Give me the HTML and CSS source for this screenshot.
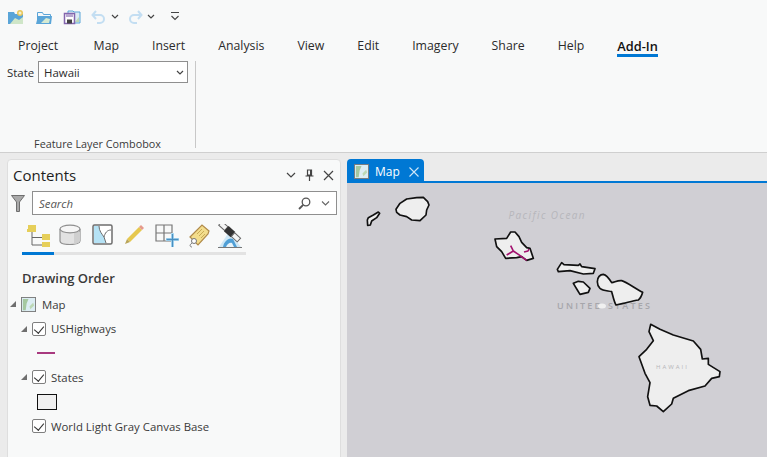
FILE: index.html
```html
<!DOCTYPE html>
<html lang="en">
<head>
<meta charset="utf-8">
<title>Map</title>
<link rel="stylesheet" href="styles.css">
</head>
<body>
<header class="ribbon">
  <div class="qat">
    <svg class="qi" width="18" height="16" viewBox="0 0 18 16"><path d="M1 3h6l1 2h8v10H1z" fill="#5aa5d8"/><path d="M3 15l5-6 4 2 4-3v7z" fill="#cfe6c8"/><circle cx="13" cy="4" r="3" fill="#e8c75a"/><circle cx="13" cy="4" r="1.500" fill="#f6f0c8"/></svg>
    <svg class="qi" width="18" height="16" viewBox="0 0 18 16"><path d="M2.500 3.500h5l1 2h7v9h-13z" fill="#f4f8fa" stroke="#5aa5d8"/><path d="M1 15l2-8h14l-1 8z" fill="#5aa5d8"/><path d="M6 14l5-5 4 1-1 4z" fill="#d6ead2"/></svg>
    <svg class="qi" width="18" height="16" viewBox="0 0 18 16"><path d="M5 2h5l1 1h6v11H5z" fill="#dcebf4" stroke="#5aa5d8"/><path d="M12 13l4-5v5z" fill="#bcd9b4"/><rect x="1.500" y="4.500" width="10" height="10" fill="#fff" stroke="#8265ad" stroke-width="1.500"/><rect x="3" y="5" width="7" height="3" fill="#b6a6cf"/><rect x="4" y="10.500" width="5" height="4" fill="#444"/></svg>
    <svg class="qi undo" width="16" height="14" viewBox="0 0 16 14"><path d="M5 1L1.500 5 5 9M2 5h7a4 4 0 0 1 0 8H6" fill="none" stroke="#c3def2" stroke-width="2"/></svg>
    <svg class="qc" width="8" height="5" viewBox="0 0 8 5"><path d="M1 1l3 3 3-3" fill="none" stroke="#444" stroke-width="1.200"/></svg>
    <svg class="qi redo" width="16" height="14" viewBox="0 0 16 14"><path d="M11 1l3.500 4L11 9M14 5H7a4 4 0 0 0 0 8h3" fill="none" stroke="#c3def2" stroke-width="2"/></svg>
    <svg class="qc" width="8" height="5" viewBox="0 0 8 5"><path d="M1 1l3 3 3-3" fill="none" stroke="#444" stroke-width="1.200"/></svg>
    <svg class="qc more" width="10" height="9" viewBox="0 0 10 9"><path d="M1 .5h8M1.500 4l3.500 3.500L8.500 4" fill="none" stroke="#444" stroke-width="1.100"/></svg>
  </div>
  <nav class="tabs">
    <span class="tab first">Project</span>
    <span class="tab">Map</span>
    <span class="tab">Insert</span>
    <span class="tab">Analysis</span>
    <span class="tab">View</span>
    <span class="tab">Edit</span>
    <span class="tab">Imagery</span>
    <span class="tab">Share</span>
    <span class="tab">Help</span>
    <span class="tab active">Add-In</span>
  </nav>
  <section class="group">
    <div class="combo-row">
      <span class="combo-label">State</span>
      <div class="combo"><span>Hawaii</span>
        <svg width="8" height="5" viewBox="0 0 8 5"><path d="M1 1l3 3 3-3" fill="none" stroke="#444" stroke-width="1.200"/></svg>
      </div>
    </div>
    <div class="group-name">Feature Layer Combobox</div>
  </section>
</header>
<main class="workspace">
  <aside class="pane">
    <div class="pane-head">
      <h1>Contents</h1>
      <div class="pane-tools">
        <svg width="10" height="6" viewBox="0 0 10 6"><path d="M1 1l4 4 4-4" fill="none" stroke="#444" stroke-width="1.200"/></svg>
        <svg width="9" height="12" viewBox="0 0 9 12"><path d="M2.500 1h4v5h-4zM.5 7h8M4.500 7v5" fill="none" stroke="#444" stroke-width="1.200"/><rect x="5" y="1" width="2" height="5" fill="#444"/></svg>
        <svg width="11" height="11" viewBox="0 0 11 11"><path d="M1 1l9 9M10 1l-9 9" fill="none" stroke="#444" stroke-width="1.200"/></svg>
      </div>
    </div>
    <div class="search-row">
      <svg width="14" height="17" viewBox="0 0 14 17"><path d="M.5.500h13L8.500 7v9.500h-3V7z" fill="#a9a9a9" stroke="#6e6e6e"/></svg>
      <div class="search">
        <span class="search-text">Search</span>
        <svg class="mag" width="13" height="13" viewBox="0 0 13 13"><circle cx="8" cy="5" r="3.800" fill="none" stroke="#555" stroke-width="1.300"/><path d="M5.200 7.800L1 12" stroke="#555" stroke-width="1.800"/></svg>
        <svg width="9" height="5" viewBox="0 0 9 5"><path d="M1 .5l3.500 3.500L8 .5" fill="none" stroke="#666" stroke-width="1.100"/></svg>
      </div>
    </div>
    <div class="view-icons">
      <svg width="24" height="24" viewBox="0 0 24 24"><rect x="1" y="1" width="8" height="4" fill="#e6cf5a"/><rect x="0" y="5" width="9" height="3" fill="#e6cf5a"/><path d="M5 8v13h10M5 13.500h10" fill="none" stroke="#666"/><rect x="15" y="10" width="8" height="6" fill="#e6cf5a"/><rect x="15" y="18" width="8" height="5" fill="#e6cf5a"/></svg>
      <svg width="22" height="21" viewBox="0 0 22 21"><path d="M1 5v12c0 2 4 3.500 10 3.500s10-1.500 10-3.500V5" fill="#e2e2e2" stroke="#8f8f8f" stroke-width="1.200"/><path d="M15 8h6v9c0 1-2 2.500-6 3z" fill="#cfcfcf"/><ellipse cx="11" cy="5" rx="10" ry="3.800" fill="#f6f6f6" stroke="#8f8f8f" stroke-width="1.200"/></svg>
      <svg width="21" height="21" viewBox="0 0 21 21"><rect x="1" y="1" width="19" height="19" rx="1.500" fill="#fff" stroke="#6d6d6d" stroke-width="1.500"/><path d="M2 2h5c0 5 3 8 5 11l2 6H2z" fill="#b5e2f5"/><path d="M7 2c0 5 3 8 5 11l2 6M19 6c-4 0-6 3-7 7" fill="none" stroke="#6d6d6d"/></svg>
      <svg width="21" height="21" viewBox="0 0 21 21"><path d="M3 15L15 3l3 3L6 18z" fill="#e6c84e"/><path d="M3 15l3 3-5 2z" fill="#b9a55a"/><path d="M15 3l2-2 3 3-2 2z" fill="#e59a8c"/></svg>
      <svg width="24" height="24" viewBox="0 0 24 24"><path d="M1 1h16v16H1zM9 1v16M1 9h16" fill="none" stroke="#777" stroke-width="1.200"/><rect x="11" y="14" width="13" height="3" fill="#aedcf5"/><rect x="16" y="9" width="3" height="14" fill="#aedcf5"/><path d="M11.500 15.500h12M17.500 10v13" stroke="#4a8fc0" stroke-width="1.300"/></svg>
      <svg width="22" height="24" viewBox="0 0 22 24"><path d="M2 13L14 1l7 6-1 3-10 11z" fill="#f3dd8c" stroke="#b08a4a" stroke-width="1.200"/><path d="M9 10l5-5M11 12l5-5M13 14l4-4" stroke="#c9ab55"/><circle cx="6" cy="17" r="2.500" fill="#fff" stroke="#777"/><path d="M4 19c-3 2-2 4 0 4" fill="none" stroke="#777"/></svg>
      <svg width="24" height="24" viewBox="0 0 24 24"><path d="M1 23L11 8l12 15z" fill="#cfe8f6"/><path d="M5 23c1-6 6-10 10-8l4 8z" fill="#4f9fd6"/><path d="M8 23c1-3 4-5 6-4l2 4z" fill="#e8f4fa"/><g transform="rotate(42 12 8)"><rect x="-1" y="5.500" width="8" height="5" fill="#f4f4f4" stroke="#666"/><rect x="7" y="4.500" width="9" height="7" fill="#333"/><rect x="16" y="5.500" width="8" height="5" fill="#f4f4f4" stroke="#666"/></g><path d="M0 23.500h24" stroke="#777"/></svg>
    </div>
    <div class="view-rule"><span></span></div>
    <h2>Drawing Order</h2>
    <ul class="tree">
      <li class="row lvl0">
        <i class="tri"></i>
        <svg width="16" height="16" viewBox="0 0 16 16"><rect x=".5" y=".5" width="15" height="15" fill="#dcedf3" stroke="#7a7a7a"/><path d="M2 2h6L6 7 5 14H2z" fill="#a5c8a0"/><path d="M13 6l1 3-4 4-1-3z" fill="#bcd8b4"/></svg>
        <span>Map</span>
      </li>
      <li class="row lvl1">
        <i class="tri"></i><i class="check"></i><span>USHighways</span>
      </li>
      <li class="row sym"><i class="line-sym"></i></li>
      <li class="row lvl1">
        <i class="tri"></i><i class="check"></i><span>States</span>
      </li>
      <li class="row sym"><i class="box-sym"></i></li>
      <li class="row lvl1">
        <i class="tri none"></i><i class="check"></i><span>World Light Gray Canvas Base</span>
      </li>
    </ul>
  </aside>
  <section class="mapview">
    <div class="map-tabs">
      <div class="map-tab">
        <svg width="15" height="15" viewBox="0 0 16 16"><rect x=".5" y=".5" width="15" height="15" fill="#dcedf3" stroke="#7a7a7a"/><path d="M2 2h6L6 7 5 14H2z" fill="#a5c8a0"/><path d="M13 6l1 3-4 4-1-3z" fill="#bcd8b4"/></svg>
        <span>Map</span>
        <svg width="10" height="10" viewBox="0 0 10 10"><path d="M.5.5l9 9M9.500.5l-9 9" fill="none" stroke="#cfe6f7" stroke-width="1.100"/></svg>
      </div>
    </div>
    <div class="map-canvas">
      <svg class="map-svg" viewBox="347 183 420 274" width="420" height="274">
        <text class="lbl-ocean" x="508.500" y="219">Pacific Ocean</text>
        <text class="lbl-us" x="557" y="309">UNITED STATES</text>
        <g class="islands" transform="translate(345 155) scale(.33333)">
          <path d="M67 195l3-7 15-8 15-9 4 4-9 13-15 10-4 12-8 1z"/>
          <path d="M153 163l12-18 20-13 30-4 20-1 13 13 4 10-7 15-2 15-18 17-25-2-15-10-20-5-10-8z"/>
          <path d="M450 252l35-2 12-19h13l12 14 8 17 15 16 10 2 10 30-20 6-15-11-15 3-33 2-12-20-15-15z"/>
          <path class="hwy" d="M497 272l8 16-20 12M505 288l15 10 25 18M537 291l12-3 3-6"/>
        </g>
        <g class="islands" transform="translate(540 260) scale(.33333)">
          <path d="M52 28l13-20 7 6 43 2 5-4 5 8 40 6-5 14-30 2-40-10-35 3z"/>
          <path d="M100 70l15-6 15 2 20 19-5 12-25 6-8-13z"/>
          <path d="M172 65C172 52 180 43 190 43C200 45 207 55 215 68C225 66 235 60 245 62C260 66 285 85 308 97C305 108 302 115 295 120C280 122 260 128 250 130L228 135C222 125 218 105 215 95C205 92 190 93 180 85C175 80 172 72 172 65z"/>
          <path d="M332 193l28 15 40 17 60 18 22 25 5 29 18-2v18l35 22-2 15-23 5-20 23-50 14-45 23-5 17-25 23-20-17-20-2-7-26 7-42-15-28-18-50 23-22 20-26-13-27z"/>
        </g>
        <text class="lbl-hi" x="656" y="369">HAWAII</text>
        <ellipse class="spot" cx="602" cy="306" rx="4" ry="2.500"/>
      </svg>
    </div>
  </section>
</main>
</body>
</html>
```
FILE: styles.css
```css
* { box-sizing: border-box; }
html, body { margin: 0; padding: 0; }
body {
  width: 767px;
  height: 457px;
  overflow: hidden;
  background: #ebebeb;
  color: #2b2b2b;
  font-family: "Open Sans", "Noto Sans", sans-serif;
  font-size: 11.400px;
}
.ribbon {
  height: 153px;
  background: #f8f9f9;
  border-bottom: 1px solid #cfcfcf;
  padding-top: 9px;
}
.qat { display: flex; align-items: center; height: 15px; padding-left: 7px; }
.qi { flex: none; margin-right: 10px; }
.undo { margin-right: 0; }
.redo { margin-left: 8px; margin-right: 0; }
.qc { flex: none; margin-left: 4px; }
.more { margin-left: 15px; }
.tabs { display: flex; gap: 33px; padding: 14px 0 0 18px; font-size: 12.300px; line-height: 16px; }
.tab { border-bottom: 3px solid transparent; }
.tab.first { margin-right: 2.500px; }
.tab.active { color: #111; font-size: 12.800px; font-weight: 600; border-bottom-color: #0078d4; }
.group { position: relative; margin-top: 4px; width: 196px; height: 87px; border-right: 1px solid #c8c8c8; padding-left: 7px; }
.combo-row { display: flex; align-items: center; gap: 4px; }
.combo-label { color: #2b2b2b; }
.combo { display: flex; align-items: center; justify-content: space-between; width: 150px; height: 22px; border: 1px solid #8f8f8f; background: #fff; padding: 0 3px 0 5px; }
.group-name { position: absolute; left: 0; right: 0; bottom: -3px; text-align: center; font-size: 10.800px; line-height: 15px; color: #3a3a3a; }
.workspace { display: flex; gap: 6px; padding: 6px 0 0 7px; height: 304px; }
.pane { flex: none; width: 334px; height: 310px; background: #f8f9f9; border: 1px solid #dedede; border-radius: 4px; }
.pane-head { display: flex; align-items: center; justify-content: space-between; height: 31px; padding: 0 6px 1px 5px; }
h1 { margin: 0; font-size: 15px; font-weight: 400; color: #1e1e1e; }
.pane-tools { display: flex; align-items: center; gap: 9px; }
.search-row { display: flex; align-items: center; gap: 7px; padding-left: 3px; }
.search { display: flex; align-items: center; width: 305px; height: 24px; border: 1px solid #8f8f8f; background: #fff; padding: 0 6px; }
.search-text { flex: 1; font-style: italic; color: #555; }
.mag { margin-right: 10px; }
.view-icons { display: grid; grid-template-columns: 32px 33px 32px 31px 33px 30px 24px; align-items: start; height: 35px; padding: 9px 0 0 19px; }
.view-icons svg { display: block; }
.view-rule { margin: 2px 0 0 14px; width: 224px; height: 3px; background: #e3e3e3; }
.view-rule span { display: block; width: 32px; height: 3px; background: #0078d4; }
h2 { margin: 13px 0 4px 14px; font-size: 13px; line-height: 20px; font-weight: 600; color: #3a3a3a; }
.tree { list-style: none; margin: 0; padding: 0; }
.row { display: flex; align-items: center; height: 24.400px; color: #3a3a3a; }
.lvl0 { padding-left: 2px; gap: 5px; }
.lvl0 svg { width: 15px; height: 15px; }
.lvl0 span { margin-left: 1px; }
.lvl1 { padding-left: 13px; gap: 5px; }
.lvl1 span { margin-left: 0; }
.tri { width: 0; height: 0; border-style: solid; border-width: 0 0 6px 6px; border-color: transparent transparent #6f6f6f transparent; }
.tri.none { visibility: hidden; }
.check { position: relative; width: 14px; height: 14px; border: 1px solid #7f7f7f; border-radius: 2px; background: #fff; }
.check::after { content: ""; position: absolute; left: 3px; top: 1px; width: 5px; height: 8px; border: solid #333; border-width: 0 1.500px 1.500px 0; transform: rotate(40deg); }
.sym { padding-left: 29px; }
.line-sym { display: block; width: 18px; height: 2px; background: #a8397f; }
.box-sym { display: block; width: 20px; height: 16px; border: 1.500px solid #111; background: #f0f0f0; }
.mapview { flex: 1; display: flex; flex-direction: column; min-width: 0; }
.map-tabs { height: 24px; border-bottom: 2px solid #0078d4; }
.map-tab { display: flex; align-items: center; gap: 6px; width: 77px; height: 22px; padding: 3px 0 0 7px; background: #0078d4; color: #fff; font-size: 12px; border-radius: 4px 4px 0 0; }
.map-tab span { margin-right: 3px; }
.map-canvas { flex: 1; background: #d0cfd4; overflow: hidden; }
.map-svg { display: block; }
.islands path { fill: #eeeeee; stroke: #111; stroke-width: 5; stroke-linejoin: round; }
.islands .hwy { fill: none; stroke: #a3126f; stroke-width: 5; }
.lbl-ocean { font-family: "Open Sans", sans-serif; font-size: 10px; font-style: italic; letter-spacing: 1.400px; fill: #b6b6bb; }
.lbl-us { font-family: "Open Sans", sans-serif; font-size: 9px; font-weight: 600; letter-spacing: 2.200px; fill: #a6a6ab; }
.lbl-hi { font-family: "Open Sans", sans-serif; font-size: 6px; letter-spacing: 2px; fill: #b5b5b8; }
.spot { fill: #f0f0f0; }
```
